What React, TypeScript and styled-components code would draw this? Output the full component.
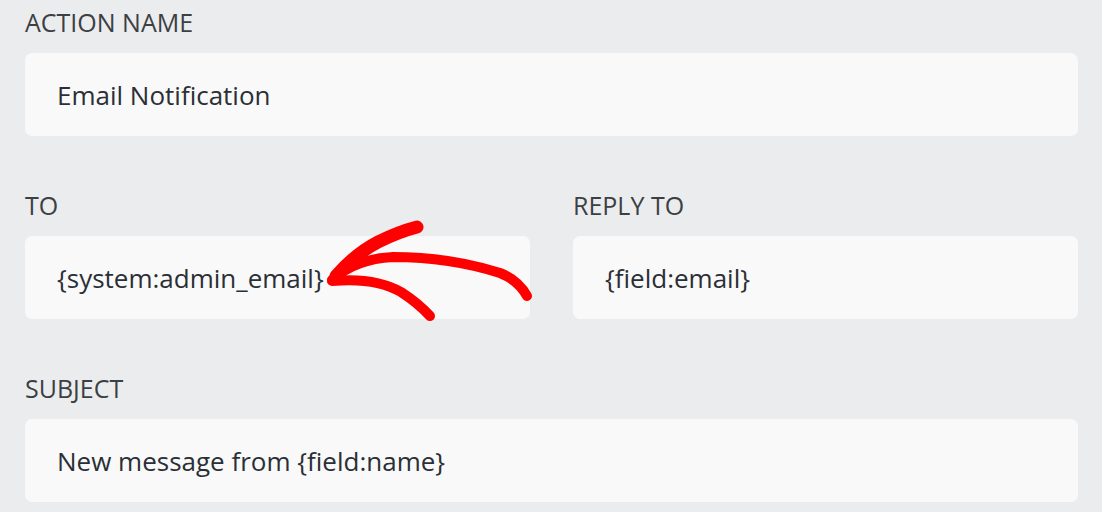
import React from "react";
import styled, { createGlobalStyle } from "styled-components";

const Global = createGlobalStyle`
  html, body { margin: 0; padding: 0; background: #ebeced; }
  body { font-family: "Open Sans", "Noto Sans", sans-serif; }
`;

const Page = styled.div`
  position: relative;
  width: 1102px;
  height: 512px;
  overflow: hidden;
  box-sizing: border-box;
  padding: 6px 24px 0 25px;
  display: flex;
  flex-direction: column;
  gap: 53px;
  background: #ebeced;
`;

const Row = styled.div<{ cols: number }>`
  display: grid;
  grid-template-columns: ${(p) => (p.cols === 2 ? "1fr 1fr" : "1fr")};
  column-gap: 43px;
`;

const Field = styled.div`
  display: flex;
  flex-direction: column;
`;

const Label = styled.label`
  font-size: 25px;
  line-height: 33px;
  color: #3c3f44;
  text-transform: uppercase;
  height: 47px;
`;

const Input = styled.div`
  height: 83px;
  box-sizing: border-box;
  background: #f9f9f9;
  border-radius: 7px;
  padding: 0 32px;
  display: flex;
  align-items: center;
  font-size: 26px;
  color: #2b2f36;
`;

const Arrow = styled.svg`
  position: absolute;
  left: 0;
  top: 0;
  pointer-events: none;
`;

export default function App() {
  return (
    <>
      <Global />
      <Page>
        <Row cols={1}>
          <Field>
            <Label>Action Name</Label>
            <Input>Email Notification</Input>
          </Field>
        </Row>
        <Row cols={2}>
          <Field>
            <Label>To</Label>
            <Input>{"{system:admin_email}"}</Input>
          </Field>
          <Field>
            <Label>Reply To</Label>
            <Input>{"{field:email}"}</Input>
          </Field>
        </Row>
        <Row cols={1}>
          <Field>
            <Label>Subject</Label>
            <Input>{"New message from {field:name}"}</Input>
          </Field>
        </Row>
        <Arrow width="1102" height="512" viewBox="0 0 1102 512">
          <g fill="none" stroke="#ff0000" strokeLinecap="round" strokeLinejoin="round">
            <path d="M527 296 Q518 280 500 273 Q450 257 393 257 Q355 259 332 280" strokeWidth="10" />
            <path d="M336 276 Q355 254 378 242 Q398 232 417 227" strokeWidth="13" />
            <path d="M332 281 Q375 277 401 292 Q418 303 430 316" strokeWidth="10" />
          </g>
        </Arrow>
      </Page>
    </>
  );
}
